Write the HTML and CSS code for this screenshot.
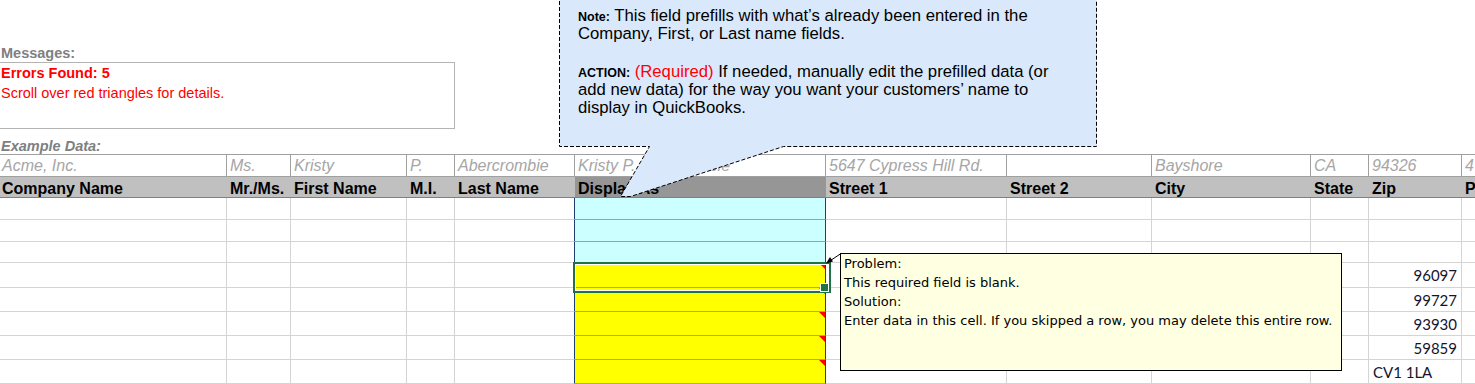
FILE: index.html
```html
<!DOCTYPE html>
<html>
<head>
<meta charset="utf-8">
<title>Customer Import</title>
<link rel="stylesheet" href="styles.css">
</head>
<body>
<div class="sheet">
  <div class="messages-label">Messages:</div>
  <div class="messages-box">
    <div class="err-title">Errors Found: 5</div>
    <div class="err-text">Scroll over red triangles for details.</div>
  </div>
  <div class="example-label">Example Data:</div>

  <div class="grid">
    <div class="row ex-row">
      <div class="cell first">Acme, Inc.</div>
      <div class="cell">Ms.</div>
      <div class="cell">Kristy</div>
      <div class="cell">P.</div>
      <div class="cell">Abercrombie</div>
      <div class="cell">Kristy P. Abercrombie</div>
      <div class="cell">5647 Cypress Hill Rd.</div>
      <div class="cell"></div>
      <div class="cell">Bayshore</div>
      <div class="cell">CA</div>
      <div class="cell">94326</div>
      <div class="cell">4</div>
    </div>
    <div class="row hd-row">
      <div class="cell first">Company Name</div>
      <div class="cell">Mr./Ms.</div>
      <div class="cell">First Name</div>
      <div class="cell">M.I.</div>
      <div class="cell">Last Name</div>
      <div class="cell disp">Display As</div>
      <div class="cell">Street 1</div>
      <div class="cell">Street 2</div>
      <div class="cell">City</div>
      <div class="cell">State</div>
      <div class="cell">Zip</div>
      <div class="cell">P</div>
    </div>

    <div class="row bd-row h22">
      <div class="cell"></div><div class="cell"></div><div class="cell"></div><div class="cell"></div><div class="cell ln"></div>
      <div class="cell disp cyan"></div>
      <div class="cell"></div><div class="cell"></div><div class="cell"></div><div class="cell"></div><div class="cell"></div><div class="cell"></div>
    </div>
    <div class="row bd-row h22">
      <div class="cell"></div><div class="cell"></div><div class="cell"></div><div class="cell"></div><div class="cell ln"></div>
      <div class="cell disp cyan"></div>
      <div class="cell"></div><div class="cell"></div><div class="cell"></div><div class="cell"></div><div class="cell"></div><div class="cell"></div>
    </div>
    <div class="row bd-row h21">
      <div class="cell"></div><div class="cell"></div><div class="cell"></div><div class="cell"></div><div class="cell ln"></div>
      <div class="cell disp cyan"></div>
      <div class="cell"></div><div class="cell"></div><div class="cell"></div><div class="cell"></div><div class="cell"></div><div class="cell"></div>
    </div>
    <div class="row bd-row h25">
      <div class="cell"></div><div class="cell"></div><div class="cell"></div><div class="cell"></div><div class="cell ln"></div>
      <div class="cell disp yellow sel"><span class="tri"></span></div>
      <div class="cell"></div><div class="cell"></div><div class="cell"></div><div class="cell"></div><div class="cell num">96097</div><div class="cell"></div>
    </div>
    <div class="row bd-row h24">
      <div class="cell"></div><div class="cell"></div><div class="cell"></div><div class="cell"></div><div class="cell ln"></div>
      <div class="cell disp yellow"><span class="tri"></span></div>
      <div class="cell"></div><div class="cell"></div><div class="cell"></div><div class="cell"></div><div class="cell num">99727</div><div class="cell"></div>
    </div>
    <div class="row bd-row h24">
      <div class="cell"></div><div class="cell"></div><div class="cell"></div><div class="cell"></div><div class="cell ln"></div>
      <div class="cell disp yellow"><span class="tri"></span></div>
      <div class="cell"></div><div class="cell"></div><div class="cell"></div><div class="cell"></div><div class="cell num">93930</div><div class="cell"></div>
    </div>
    <div class="row bd-row h24">
      <div class="cell"></div><div class="cell"></div><div class="cell"></div><div class="cell"></div><div class="cell ln"></div>
      <div class="cell disp yellow"><span class="tri"></span></div>
      <div class="cell"></div><div class="cell"></div><div class="cell"></div><div class="cell"></div><div class="cell num">59859</div><div class="cell"></div>
    </div>
    <div class="row bd-row h24">
      <div class="cell"></div><div class="cell"></div><div class="cell"></div><div class="cell"></div><div class="cell ln"></div>
      <div class="cell disp yellow"><span class="tri"></span></div>
      <div class="cell"></div><div class="cell"></div><div class="cell"></div><div class="cell"></div><div class="cell txt">CV1 1LA</div><div class="cell"></div>
    </div>
  </div>
</div>

<svg class="overlay" width="1475" height="384" viewBox="0 0 1475 384">
  <path class="callout-shape" d="M559.5,-5 L559.5,146.5 L649.5,146.5 L620.5,196.5 L630.5,196.5 L783.5,146.5 L1096.5,146.5 L1096.5,-5 Z"/>
  <line class="arrow-line" x1="841" y1="253.5" x2="829" y2="261.5"/>
  <polygon class="arrow-head" points="826,263.5 833,261.5 830,257"/>
</svg>

<div class="callout-text">
  <p class="para"><b class="lbl">Note:</b> This field prefills with what’s already been entered in the<br>Company, First, or Last name fields.</p>
  <p class="para action"><b class="lbl">ACTION:</b> <span class="req">(Required)</span> If needed, manually edit the prefilled data (or<br>add new data) for the way you want your customers’ name to<br>display in QuickBooks.</p>
</div>

<div class="tooltip">
  <div>Problem:</div>
  <div>This required field is blank.</div>
  <div>Solution:</div>
  <div>Enter data in this cell. If you skipped a row, you may delete this entire row.</div>
</div>
</body>
</html>
```

FILE: styles.css
```css
* { box-sizing: border-box; }

html, body {
  margin: 0;
  padding: 0;
  overflow: hidden;
  background: #ffffff;
}

body {
  width: 1475px;
  height: 384px;
  position: relative;
  font-family: "Liberation Sans", Arial, sans-serif;
  color: #000;
}

.sheet {
  width: 1475px;
}

.messages-label {
  padding-top: 45px;
  padding-left: 1px;
  line-height: 16px;
  font-size: 14.5px;
  font-weight: bold;
  color: #808080;
}

.messages-box {
  margin-top: 1px;
  width: 455px;
  height: 67px;
  border: 1px solid #b4b4b4;
  border-left: none;
  padding-left: 1px;
  color: #ff0000;
}

.err-title {
  font-weight: bold;
  font-size: 14.5px;
  line-height: 20px;
}

.err-text {
  font-size: 14.5px;
  line-height: 20px;
}

.example-label {
  margin-top: 9px;
  padding-left: 1px;
  line-height: 16px;
  font-size: 14.5px;
  font-weight: bold;
  font-style: italic;
  color: #808080;
}

.grid {
  width: 1475px;
}

.row {
  display: grid;
  grid-template-columns: 227px 64px 116px 48px 120px 251px 181px 145px 159px 58px 93px 80px;
}

.cell {
  position: relative;
  overflow: hidden;
  white-space: nowrap;
  border-right: 1px solid #d4d4d4;
  border-bottom: 1px solid #d4d4d4;
}

/* example row */
.ex-row {
  height: 23px;
  border-top: 1px solid #a0a0a0;
}
.ex-row .cell {
  border-color: #a0a0a0;
  font-size: 16px;
  font-style: italic;
  color: #a6a6a6;
  line-height: 20px;
  padding-top: 1px;
  padding-left: 3px;
}
.ex-row .cell.first { padding-left: 2px; }

/* header row */
.hd-row {
  height: 21px;
  background: #c0c0c0;
}
.hd-row .cell {
  border-right: none;
  border-bottom: 1px solid #808080;
  font-size: 16px;
  font-weight: bold;
  line-height: 19px;
  padding-top: 2px;
  padding-left: 3px;
}
.hd-row .cell.first { padding-left: 2px; }
.hd-row .cell.disp { background: #969696; }

/* body rows */
.h21 { height: 21px; }
.h22 { height: 22px; }
.h24 { height: 24px; }
.h25 { height: 25px; }

.bd-row .cell.ln { border-right-color: #1f3f73; }
.bd-row .cell.disp {
  border-right-color: #1f3f73;
  border-bottom-color: #a0a0a0;
}
.cyan { background: #ccffff; }
.yellow { background: #ffff00; }

.num, .txt {
  font-family: Lato, "Liberation Sans", sans-serif;
  font-size: 15px;
  line-height: 20px;
  padding-top: 2px;
  color: #14142e;
}
.num { text-align: right; padding-right: 4px; }
.txt { padding-left: 4px; }

.tri {
  position: absolute;
  top: 0;
  right: 0;
  width: 0;
  height: 0;
  border-top: 6px solid #ff0000;
  border-left: 6px solid transparent;
}

.sel {
  overflow: visible;
  z-index: 2;
}
.sel::after {
  content: "";
  position: absolute;
  left: -2px;
  top: -1px;
  width: 254px;
  height: 27px;
  border: 2px solid #217346;
  box-shadow: inset 0 0 0 1px #ffffff;
}
.sel::before {
  content: "";
  position: absolute;
  left: 245px;
  top: 20px;
  width: 7px;
  height: 7px;
  background: #217346;
  border: 1px solid #ffffff;
  z-index: 1;
}

/* overlays */
.overlay {
  position: absolute;
  left: 0;
  top: 0;
  pointer-events: none;
  z-index: 5;
}
.callout-shape {
  fill: #d9e9fb;
  stroke: #000000;
  stroke-width: 1;
  stroke-dasharray: 4 2;
}
.arrow-line {
  stroke: #000000;
  stroke-width: 1;
}
.arrow-head {
  fill: #000000;
}

.callout-text {
  position: absolute;
  left: 578px;
  top: 7px;
  z-index: 6;
  font-size: 16.7px;
  line-height: 18px;
  color: #000;
  white-space: nowrap;
}
.para { margin: 0; }
.para.action { margin-top: 20px; }
.lbl { font-size: 12.5px; line-height: 1; }
.req { color: #ff0000; }

.tooltip {
  position: absolute;
  left: 840px;
  top: 253px;
  width: 502px;
  height: 118px;
  z-index: 7;
  background: #ffffe1;
  border: 1px solid #000000;
  padding-left: 3px;
  font-family: "DejaVu Sans", sans-serif;
  font-size: 13px;
  line-height: 19px;
  white-space: nowrap;
  color: #000;
}
```
